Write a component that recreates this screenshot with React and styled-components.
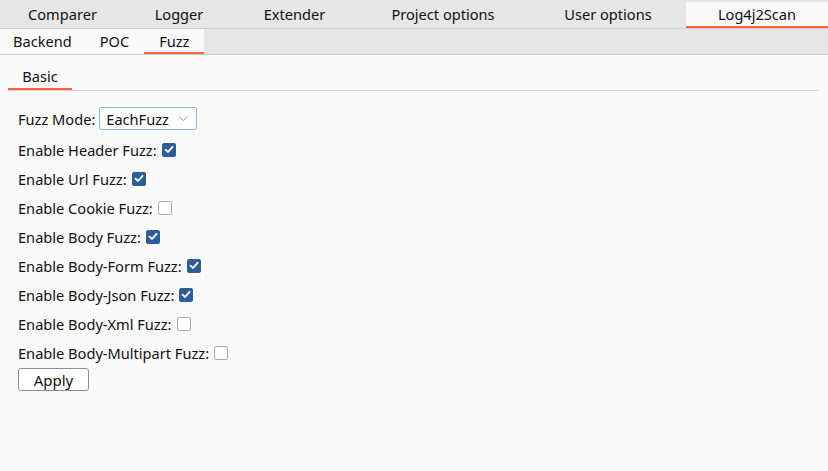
import React from 'react';
import styled, { createGlobalStyle } from 'styled-components';

const GlobalStyle = createGlobalStyle`
	body {
		margin: 0;
		background: #fafafa;
		font-family: "Noto Sans", "Liberation Sans", sans-serif;
		font-size: 14.6px;
		color: #111;
	}
`

const Page = styled.div`
	width: 828px;
	height: 471px;
	background: #fafafa;
	display: flex;
	flex-direction: column;
`

const TopTabs = styled.div`
	height: 28px;
	background: #e6e6e6;
	border-bottom: 1px solid #cdcdcd;
	display: flex;
	flex-direction: row;
`

const TopTab = styled.div`
	width: ${props => props.width}px;
	margin-top: 2px;
	height: 24px;
	display: flex;
	align-items: center;
	justify-content: center;
	background: ${props => props.active ? '#fafafa' : 'transparent'};
	border-bottom: 2px solid ${props => props.active ? '#ff6633' : 'transparent'};
	white-space: nowrap;
`

const SubTabs = styled.div`
	height: 25px;
	background: #e6e6e6;
	border-bottom: 1px solid #cdcdcd;
	display: flex;
	flex-direction: row;
`

const SubTab = styled.div`
	padding: 0 ${props => props.pad}px;
	height: 23px;
	display: flex;
	align-items: center;
	background: #fafafa;
	border-bottom: 2px solid ${props => props.active ? '#ff6633' : '#fafafa'};
`

const Content = styled.div`
	padding: 9px 9px 0 8px;
	display: flex;
	flex-direction: column;
`

const InnerTabs = styled.div`
	height: 26px;
	border-bottom: 1px solid #cfd2d2;
	display: flex;
`

const InnerTab = styled.div`
	width: 64px;
	height: 24px;
	display: flex;
	align-items: center;
	justify-content: center;
	border-bottom: 2px solid #ff6633;
	margin-bottom: -1px;
`

const Form = styled.div`
	padding: 16px 0 0 10px;
	display: flex;
	flex-direction: column;
	align-items: flex-start;
`

const ModeRow = styled.div`
	display: flex;
	align-items: center;
	gap: 4px;
	height: 23px;
	margin-bottom: 5px;
`

const Select = styled.div`
	box-sizing: border-box;
	width: 98px;
	height: 23px;
	border: 1px solid #86b8ea;
	border-radius: 2px;
	background: #fff;
	display: flex;
	align-items: center;
	justify-content: space-between;
	padding: 0 8px 0 6px;
`

const Row = styled.div`
	height: 29px;
	display: flex;
	align-items: center;
	gap: 5px;
`

const Box = styled.span`
	box-sizing: border-box;
	width: 14px;
	height: 14px;
	border-radius: 2px;
	border: 1px solid ${props => props.checked ? '#2c5f97' : '#ababab'};
	background: ${props => props.checked ? '#2c5f97' : '#fff'};
	display: flex;
	align-items: center;
	justify-content: center;
`

const Button = styled.button`
	box-sizing: border-box;
	width: 71px;
	height: 23px;
	margin-top: 1px;
	border: 1px solid #8c8c98;
	border-radius: 3px;
	background: #fff;
	font-family: inherit;
	font-size: 15px;
	color: #111;
	padding: 0;
`

const Check = (props) => (
	<Box checked={props.checked}>
		{props.checked &&
			<svg width="10" height="9" viewBox="0 0 10 9">
				<path d="M1.5 4.6 L4 7 L8.6 1.8" fill="none" stroke="#fff" strokeWidth="1.8" strokeLinecap="round" strokeLinejoin="round" />
			</svg>}
	</Box>
)

const topTabs = [
	['Comparer', 125], ['Logger', 108], ['Extender', 123],
	['Project options', 174], ['User options', 156], ['Log4j2Scan', 142]
]

const options = [
	['Enable Header Fuzz:', true],
	['Enable Url Fuzz:', true],
	['Enable Cookie Fuzz:', false],
	['Enable Body Fuzz:', true],
	['Enable Body-Form Fuzz:', true],
	['Enable Body-Json Fuzz:', true],
	['Enable Body-Xml Fuzz:', false],
	['Enable Body-Multipart Fuzz:', false]
]

const App = () => {
	return (<Page>
		<GlobalStyle />
		<TopTabs>
			{topTabs.map(([name, w]) => <TopTab key={name} width={w} active={name === 'Log4j2Scan'}>{name}</TopTab>)}
		</TopTabs>
		<SubTabs>
			<SubTab pad={13}>Backend</SubTab>
			<SubTab pad={15}>POC</SubTab>
			<SubTab pad={15} active>Fuzz</SubTab>
		</SubTabs>
		<Content>
			<InnerTabs>
				<InnerTab>Basic</InnerTab>
			</InnerTabs>
			<Form>
				<ModeRow>
					<span>Fuzz Mode:</span>
					<Select>
						<span>EachFuzz</span>
						<svg width="9" height="5" viewBox="0 0 9 5">
							<path d="M0.5 0.5 L4.5 4.5 L8.5 0.5" fill="none" stroke="#9a9a9a" strokeWidth="1" />
						</svg>
					</Select>
				</ModeRow>
				{options.map(([label, on]) => <Row key={label}><span>{label}</span><Check checked={on} /></Row>)}
				<Button>Apply</Button>
			</Form>
		</Content>
	</Page>);
};

export default App
